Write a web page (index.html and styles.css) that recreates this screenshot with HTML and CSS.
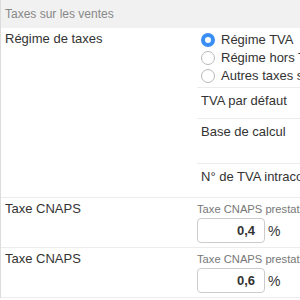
FILE: index.html
```
<!DOCTYPE html>
<html>
<head>
    <meta charset=utf-8 />
    <link rel="stylesheet" href="styles.css">
</head>
<body>
  <div class="page">
    <div class="panel">
      <div class="panel-title">Taxes sur les ventes</div>

      <div class="row">
        <div class="label">Régime de taxes</div>
        <div class="field">
          <div class="sub radios">
            <label class="radio"><span class="dot checked"></span>Régime TVA</label>
            <label class="radio"><span class="dot"></span>Régime hors TVA</label>
            <label class="radio"><span class="dot"></span>Autres taxes sur les ventes</label>
          </div>
          <div class="sub tva">TVA par défaut</div>
          <div class="sub base">Base de calcul</div>
          <div class="sub intra">N° de TVA intracommunautaire</div>
        </div>
      </div>

      <div class="row">
        <div class="label">Taxe CNAPS</div>
        <div class="field cnaps">
          <div class="hint">Taxe CNAPS prestations de sécurité</div>
          <div class="amount"><span class="box">0,4</span><span class="unit">%</span></div>
        </div>
      </div>

      <div class="row">
        <div class="label">Taxe CNAPS</div>
        <div class="field cnaps">
          <div class="hint">Taxe CNAPS prestations de sécurité</div>
          <div class="amount"><span class="box">0,6</span><span class="unit">%</span></div>
        </div>
      </div>
    </div>
  </div>
</body>
</html>
```

FILE: styles.css
```
html, body {
    margin: 0;
    overflow: hidden;
}

body {
    color: #333;
    background-color: #fff;
    font-family: "Liberation Sans", Arial, sans-serif;
    font-size: 13px;
}

.page {
    width: 300px;
    height: 300px;
    overflow: hidden;
}

.panel {
    width: 600px;
    border-left: 1px solid #dcdcdc;
    white-space: nowrap;
}

.panel-title {
    height: 28px;
    line-height: 29px;
    padding-left: 4px;
    background-color: #f1f1f1;
    color: #888;
    font-size: 12px;
}

.row {
    display: grid;
    grid-template-columns: 196px 1fr;
    border-bottom: 1px solid #ececec;
}

.label {
    padding: 1px 4px;
    line-height: 20px;
}

.sub {
    padding: 3px 4px 0;
    line-height: 20px;
    border-bottom: 1px solid #ececec;
}

.sub:last-child {
    border-bottom: none;
}

.radios {
    padding-bottom: 2px;
}

.radio {
    display: flex;
    align-items: center;
    gap: 6px;
    height: 18px;
    line-height: 18px;
}

.dot {
    box-sizing: border-box;
    width: 14px;
    height: 14px;
    border: 1px solid #b9b9b9;
    border-radius: 50%;
    background: #fff;
}

.dot.checked {
    border: 4.5px solid #3a8ef5;
    background: #fff;
}

.tva {
    height: 27px;
}

.base {
    height: 41px;
}

.intra {
    height: 30px;
}

.cnaps {
    padding: 3px 0 4px;
}

.hint {
    font-size: 11.2px;
    line-height: 16px;
    color: #777;
}

.amount {
    display: flex;
    align-items: center;
    gap: 3px;
    margin-top: 1px;
}

.box {
    box-sizing: border-box;
    width: 68px;
    height: 25px;
    line-height: 23px;
    padding-right: 9px;
    border: 1px solid #ccc;
    border-radius: 4px;
    text-align: right;
    font-weight: bold;
}

.unit {
    font-size: 14px;
}
```
